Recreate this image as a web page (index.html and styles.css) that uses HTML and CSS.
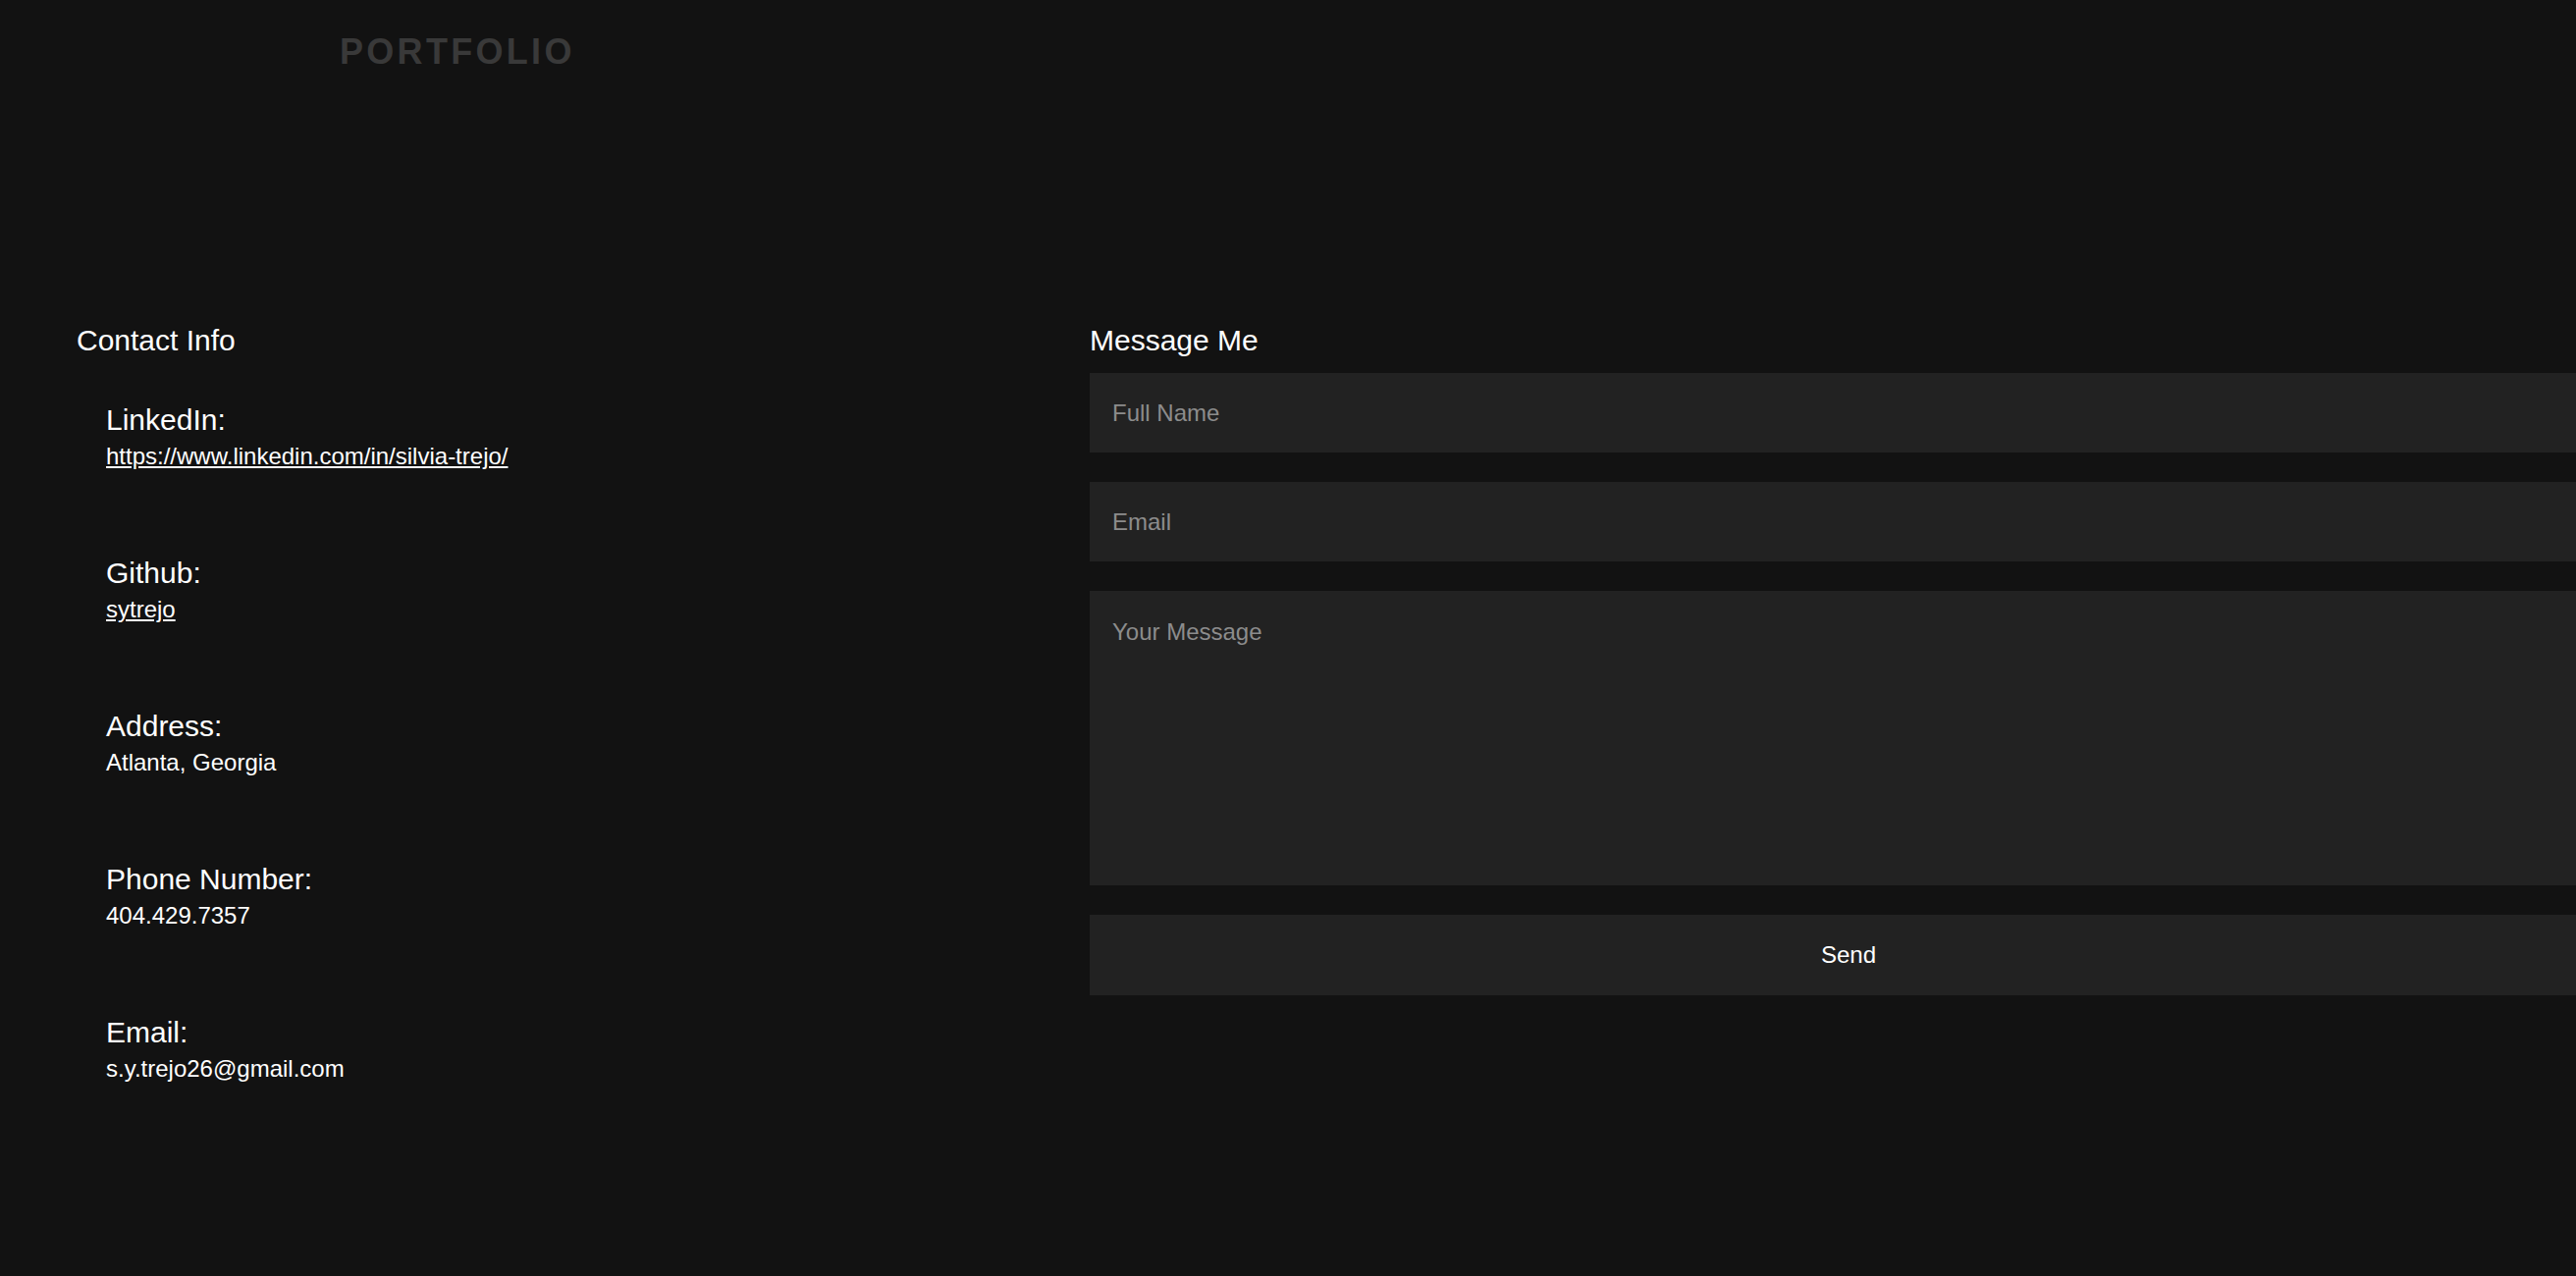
FILE: index.html
```html
<!DOCTYPE html>
<html lang="en">
<head>
<meta charset="utf-8">
<title>Portfolio - Contact</title>
<link rel="stylesheet" href="styles.css">
</head>
<body>
<header class="site-header">
  <div class="brand">PORTFOLIO</div>
</header>
<main class="contact">
  <section class="contact-info">
    <h2 class="section-title">Contact Info</h2>
    <ul class="info-list">
      <li class="info-item">
        <div class="info-label">LinkedIn:</div>
        <a class="info-value link" href="#">https://www.linkedin.com/in/silvia-trejo/</a>
      </li>
      <li class="info-item">
        <div class="info-label">Github:</div>
        <a class="info-value link" href="#">sytrejo</a>
      </li>
      <li class="info-item">
        <div class="info-label">Address:</div>
        <div class="info-value">Atlanta, Georgia</div>
      </li>
      <li class="info-item">
        <div class="info-label">Phone Number:</div>
        <div class="info-value">404.429.7357</div>
      </li>
      <li class="info-item">
        <div class="info-label">Email:</div>
        <div class="info-value">s.y.trejo26@gmail.com</div>
      </li>
    </ul>
  </section>
  <section class="message">
    <h2 class="section-title">Message Me</h2>
    <form class="message-form">
      <input class="field" type="text" placeholder="Full Name">
      <input class="field" type="email" placeholder="Email">
      <textarea class="field area" placeholder="Your Message"></textarea>
      <button class="send" type="button">Send</button>
    </form>
  </section>
</main>
</body>
</html>
```
FILE: styles.css
```css
html {
  overflow-x: hidden;
  background: #121212;
}
body {
  margin: 0;
  background: #121212;
  color: #ffffff;
  font-family: "Liberation Sans", Arial, Helvetica, sans-serif;
  min-height: 1300px;
  overflow-x: hidden;
}
.site-header {
  padding: 31px 0 0 346px;
  height: 60px;
}
.brand {
  font-size: 36px;
  line-height: 44px;
  font-weight: 700;
  letter-spacing: 3.3px;
  color: #393939;
}
.contact {
  display: grid;
  grid-template-columns: 1032px 1546px;
  padding-left: 78px;
  margin-top: 239px;
  width: 2578px;
}
.section-title {
  margin: 0;
  font-size: 30px;
  line-height: 34px;
  font-weight: 400;
  color: #ffffff;
}
.info-list {
  list-style: none;
  margin: 44px 0 0;
  padding: 0 0 0 30px;
}
.info-item {
  display: flex;
  flex-direction: column;
  align-items: flex-start;
  margin-bottom: 83px;
}
.info-label {
  font-size: 30px;
  line-height: 40px;
}
.info-value {
  font-size: 24px;
  line-height: 33px;
  color: #ffffff;
}
.link {
  color: #ffffff;
  text-decoration: underline;
}
.message-form {
  display: flex;
  flex-direction: column;
  gap: 30px;
  margin-top: 16px;
}
.field {
  box-sizing: border-box;
  width: 1546px;
  height: 81px;
  padding: 0 23px;
  border: 0;
  margin: 0;
  background: #222222;
  color: #ffffff;
  font-family: "Liberation Sans", Arial, Helvetica, sans-serif;
  font-size: 24px;
  outline: none;
}
.field::placeholder {
  color: #8c8c8c;
  opacity: 1;
}
.area {
  height: 300px;
  padding: 28px 23px;
  resize: none;
  line-height: 27px;
}
.send {
  box-sizing: border-box;
  width: 1546px;
  height: 82px;
  border: 0;
  background: #222222;
  color: #ffffff;
  font-family: "Liberation Sans", Arial, Helvetica, sans-serif;
  font-size: 24px;
  cursor: pointer;
}
```
